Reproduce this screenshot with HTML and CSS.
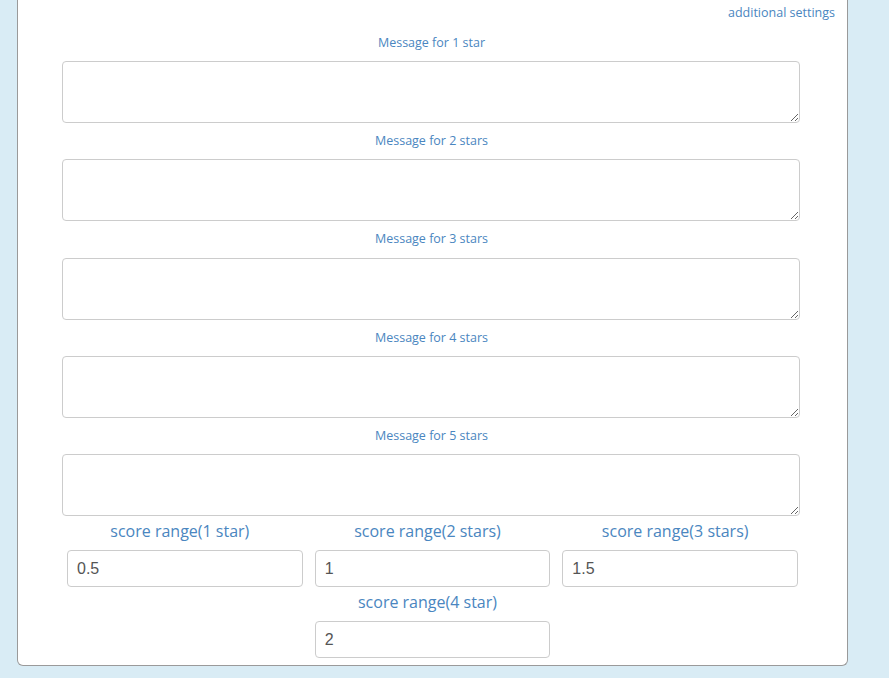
FILE: index.html
```html
<!DOCTYPE html>
<html>
<head>
<meta charset="utf-8">
<link rel="stylesheet" href="styles.css">
</head>
<body>
<div class="panel">
  <div class="top-row"><a class="settings-link" href="#">additional settings</a></div>
  <div class="messages">
    <label class="msg-label">Message for 1 star</label>
    <textarea class="msg-box"></textarea>
    <label class="msg-label">Message for 2 stars</label>
    <textarea class="msg-box"></textarea>
    <label class="msg-label">Message for 3 stars</label>
    <textarea class="msg-box"></textarea>
    <label class="msg-label">Message for 4 stars</label>
    <textarea class="msg-box"></textarea>
    <label class="msg-label">Message for 5 stars</label>
    <textarea class="msg-box"></textarea>
  </div>
  <div class="scores">
    <div class="score-col">
      <div class="score-label">score range(1 star)</div>
      <input class="score-input" type="text" value="0.5">
    </div>
    <div class="score-col">
      <div class="score-label">score range(2 stars)</div>
      <input class="score-input" type="text" value="1">
    </div>
    <div class="score-col">
      <div class="score-label">score range(3 stars)</div>
      <input class="score-input" type="text" value="1.5">
    </div>
    <div class="score-col second">
      <div class="score-label">score range(4 star)</div>
      <input class="score-input" type="text" value="2">
    </div>
  </div>
</div>
</body>
</html>
```
FILE: styles.css
```css
html, body {
  margin: 0;
  padding: 0;
}
body {
  background: #d9ecf5;
  font-family: "Open Sans", "Liberation Sans", sans-serif;
  height: 678px;
  overflow: hidden;
}
.panel {
  margin: 0 41px 0 17px;
  background: #fff;
  border: 1px solid #9a9a9a;
  border-top: none;
  border-radius: 0 0 6px 6px;
  padding: 4px 0 7px 0;
}
.top-row {
  display: flex;
  justify-content: flex-end;
  padding-right: 12px;
  margin-bottom: 2.75px;
}
.settings-link {
  font-size: 12.5px;
  line-height: 18px;
  color: #4a86c0;
  text-decoration: none;
}
.messages {
  display: flex;
  flex-direction: column;
  padding: 0 46px 0 44px;
}
.msg-label {
  display: block;
  text-align: center;
  font-size: 12.5px;
  line-height: 20px;
  color: #4a86c0;
  margin-top: 8px;
  margin-bottom: 8.25px;
}
.msg-box {
  box-sizing: border-box;
  width: 738px;
  height: 62px;
  margin: 0;
  border: 1px solid #cccccc;
  border-radius: 4px;
  background: #fff;
  font-family: "Open Sans", "Liberation Sans", sans-serif;
  font-size: 14px;
  padding: 6px 10px;
}
.scores {
  display: grid;
  grid-template-columns: repeat(3, 1fr);
  padding: 0 43px;
  margin-top: 4px;
  row-gap: 4px;
}
.score-col {
  padding: 0 6px;
  display: flex;
  flex-direction: column;
}
.score-col.second {
  grid-column: 2;
}
.score-label {
  text-align: center;
  padding-right: 10px;
  font-size: 16px;
  line-height: 22px;
  color: #4a86c0;
  margin-bottom: 8px;
}
.score-input {
  box-sizing: border-box;
  width: 100%;
  height: 37px;
  margin: 0;
  border: 1px solid #cccccc;
  border-radius: 4px;
  padding: 0 9px;
  font-family: "Liberation Sans", Arial, sans-serif;
  font-size: 16px;
  color: #555;
  background: #fff;
}
```
